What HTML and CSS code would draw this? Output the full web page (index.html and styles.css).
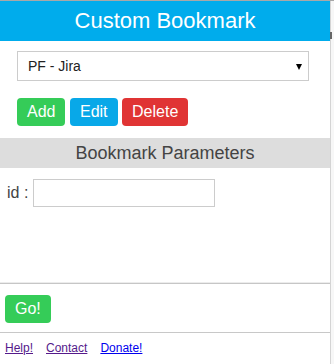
FILE: index.html
```html
<!DOCTYPE html>
<html>
<head>
<meta charset="utf-8">
<link rel="stylesheet" href="styles.css">
</head>
<body>
<div class="frame">
  <div class="popup">
    <header class="title">Custom Bookmark</header>
    <section class="controls">
      <div class="select-wrap">
        <select class="picker"><option>PF - Jira</option></select>
      </div>
      <div class="actions">
        <button class="btn btn-add">Add</button>
        <button class="btn btn-edit">Edit</button>
        <button class="btn btn-delete">Delete</button>
      </div>
    </section>
    <div class="section-head">Bookmark Parameters</div>
    <div class="params">
      <div class="param-row">
        <label class="param-label">id :</label>
        <input class="param-input" type="text">
      </div>
    </div>
    <div class="run">
      <button class="btn btn-go">Go!</button>
    </div>
    <footer class="links">
      <a class="link visited" href="#">Help!</a>
      <a class="link visited" href="#">Contact</a>
      <a class="link" href="#">Donate!</a>
    </footer>
  </div>
  <div class="edge"><span class="edge-glyph"></span></div>
</div>
</body>
</html>
```
FILE: styles.css
```css
html, body {
  margin: 0;
  padding: 0;
  background: #fff;
}
body {
  font-family: "Liberation Sans", Arial, sans-serif;
  width: 334px;
  height: 364px;
  overflow: hidden;
}
.frame {
  display: flex;
  height: 364px;
  border-top: 1px solid #a8a8a8;
  box-sizing: border-box;
}
.popup {
  width: 330px;
  flex: none;
  display: flex;
  flex-direction: column;
}
.title {
  background: #00acec;
  color: #fff;
  font-size: 22px;
  height: 40px;
  line-height: 40px;
  text-align: center;
}
.controls {
  padding: 10px 0 12px 17px;
}
.select-wrap {
  position: relative;
  width: 292px;
}
.select-wrap::after {
  content: "";
  position: absolute;
  right: 7px;
  top: 13px;
  width: 0;
  height: 0;
  border-left: 3.5px solid transparent;
  border-right: 3.5px solid transparent;
  border-top: 6px solid #000;
  pointer-events: none;
}
.picker {
  appearance: none;
  -webkit-appearance: none;
  display: block;
  width: 292px;
  height: 30px;
  box-sizing: border-box;
  border: 1px solid #cccccc;
  border-radius: 0;
  background: #fff;
  padding: 0 10px;
  font-family: "Liberation Sans", Arial, sans-serif;
  font-size: 14px;
  color: #222;
  outline: none;
}
.actions {
  margin-top: 17px;
  display: flex;
  gap: 4.5px;
}
.btn {
  height: 28px;
  box-sizing: border-box;
  padding: 0 10px;
  border: none;
  border-radius: 4px;
  color: #fff;
  font-family: "Liberation Sans", Arial, sans-serif;
  font-size: 16px;
  line-height: 28px;
  cursor: pointer;
}
.btn-add, .btn-go { background: #35cc58; }
.btn-edit { background: #08a8e8; }
.btn-delete { background: #e03434; }
.section-head {
  background: #dddddd;
  color: #444;
  font-size: 18px;
  height: 30px;
  line-height: 30px;
  text-align: center;
}
.params {
  height: 115px;
  padding: 11px 0 0 7px;
  box-sizing: border-box;
}
.param-row {
  display: flex;
  align-items: center;
  gap: 5px;
}
.param-label {
  color: #444;
  font-size: 16px;
}
.param-input {
  width: 182px;
  height: 28px;
  box-sizing: border-box;
  border: 1px solid #cccccc;
  padding: 0 4px;
  margin: 0;
  outline: none;
}
.run {
  border-top: 1px solid #c6c6c6;
  box-shadow: 0 -1px 0 #ececec;
  border-bottom: 1px solid #c8c8c8;
  padding: 11px 0 9px 5px;
}
.links {
  padding: 8px 0 0 5px;
  font-size: 12px;
  display: flex;
  gap: 13px;
}
.link { color: #0000ee; text-decoration: underline; }
.link.visited { color: #551a8b; }
.edge {
  flex: 1;
  border-left: 1px solid #d4d4d4;
  background: #f7f7f7;
  position: relative;
}
.edge-glyph {
  position: absolute;
  left: -1px;
  top: 31px;
  width: 2px;
  height: 7px;
  background: #666;
}
```
